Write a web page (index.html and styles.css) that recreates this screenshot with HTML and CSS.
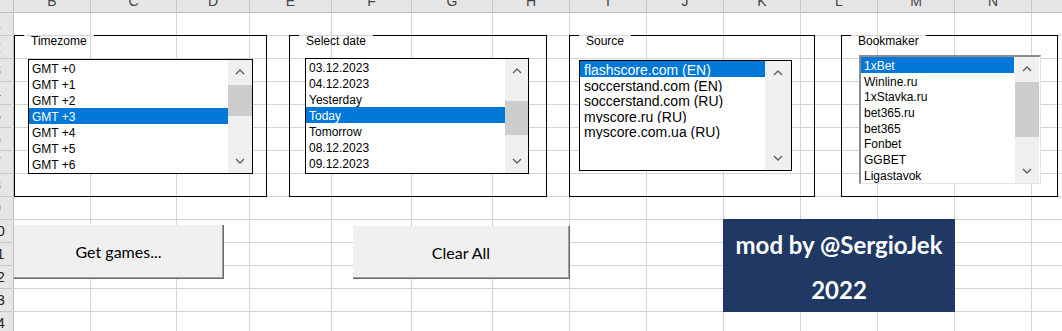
FILE: index.html
```html
<!DOCTYPE html>
<html lang="en">
<head>
    <meta charset="UTF-8">
    <title>Games parser</title>
    <link rel="stylesheet" href="styles.css">
</head>
<body>
<div class="sheet">
    <div class="col-heads">
        <div class="corner"></div>
        <div class="ch w77"><span>B</span></div>
        <div class="ch w86"><span>C</span></div>
        <div class="ch w73"><span>D</span></div>
        <div class="ch w82"><span>E</span></div>
        <div class="ch w80"><span>F</span></div>
        <div class="ch w81"><span>G</span></div>
        <div class="ch w77"><span>H</span></div>
        <div class="ch w77"><span>I</span></div>
        <div class="ch w77"><span>J</span></div>
        <div class="ch w77"><span>K</span></div>
        <div class="ch w77"><span>L</span></div>
        <div class="ch w77"><span>M</span></div>
        <div class="ch w77"><span>N</span></div>
        <div class="ch w77"><span>O</span></div>
    </div>
    <div class="grid">
        <div class="row-heads">
            <div class="rh">1</div>
            <div class="rh">2</div>
            <div class="rh">3</div>
            <div class="rh">4</div>
            <div class="rh">5</div>
            <div class="rh">6</div>
            <div class="rh">7</div>
            <div class="rh">8</div>
            <div class="rh">9</div>
            <div class="rh">10</div>
            <div class="rh">11</div>
            <div class="rh">12</div>
            <div class="rh">13</div>
            <div class="rh">14</div>
        </div>
        <div class="col w77"></div>
        <div class="col w86"></div>
        <div class="col w73"></div>
        <div class="col w82"></div>
        <div class="col w80"></div>
        <div class="col w81"></div>
        <div class="col w77"></div>
        <div class="col w77"></div>
        <div class="col w77"></div>
        <div class="col w77"></div>
        <div class="col w77"></div>
        <div class="col w77"></div>
        <div class="col w77"></div>
        <div class="col w77"></div>
    </div>

    <!-- form controls lying over the cells -->
    <div class="controls">
        <div class="frames">
            <div class="frame frame-tz">
                <div class="frame-head"><span class="edge"></span><span class="caption">Timezome</span><span class="edge fill"></span></div>
                <div class="listbox lb-tz">
                    <ul class="items">
                        <li>GMT +0</li>
                        <li>GMT +1</li>
                        <li>GMT +2</li>
                        <li class="sel">GMT +3</li>
                        <li>GMT +4</li>
                        <li>GMT +5</li>
                        <li>GMT +6</li>
                        <li>GMT +7</li>
                    </ul>
                    <div class="scroll">
                        <div class="arrow"><svg class="chev" width="10" height="6" viewBox="0 0 10 6"><polyline points="1,5 5,1 9,5"/></svg></div>
                        <div class="track"><div class="thumb"></div></div>
                        <div class="arrow"><svg class="chev" width="10" height="6" viewBox="0 0 10 6"><polyline points="1,1 5,5 9,1"/></svg></div>
                    </div>
                </div>
            </div>

            <div class="frame frame-date">
                <div class="frame-head"><span class="edge"></span><span class="caption">Select date</span><span class="edge fill"></span></div>
                <div class="listbox lb-date">
                    <ul class="items">
                        <li>03.12.2023</li>
                        <li>04.12.2023</li>
                        <li>Yesterday</li>
                        <li class="sel">Today</li>
                        <li>Tomorrow</li>
                        <li>08.12.2023</li>
                        <li>09.12.2023</li>
                        <li>10.12.2023</li>
                    </ul>
                    <div class="scroll">
                        <div class="arrow"><svg class="chev" width="10" height="6" viewBox="0 0 10 6"><polyline points="1,5 5,1 9,5"/></svg></div>
                        <div class="track"><div class="thumb"></div></div>
                        <div class="arrow"><svg class="chev" width="10" height="6" viewBox="0 0 10 6"><polyline points="1,1 5,5 9,1"/></svg></div>
                    </div>
                </div>
            </div>

            <div class="frame frame-src">
                <div class="frame-head"><span class="edge"></span><span class="caption">Source</span><span class="edge fill"></span></div>
                <div class="listbox lb-src">
                    <ul class="items">
                        <li class="sel">flashscore.com (EN)</li>
                        <li>soccerstand.com (EN)</li>
                        <li>soccerstand.com (RU)</li>
                        <li>myscore.ru (RU)</li>
                        <li>myscore.com.ua (RU)</li>
                    </ul>
                    <div class="scroll">
                        <div class="arrow"><svg class="chev" width="10" height="6" viewBox="0 0 10 6"><polyline points="1,5 5,1 9,5"/></svg></div>
                        <div class="track"></div>
                        <div class="arrow"><svg class="chev" width="10" height="6" viewBox="0 0 10 6"><polyline points="1,1 5,5 9,1"/></svg></div>
                    </div>
                </div>
            </div>

            <div class="frame frame-bm">
                <div class="frame-head"><span class="edge"></span><span class="caption">Bookmaker</span><span class="edge fill"></span></div>
                <div class="listbox lb-bm">
                    <ul class="items">
                        <li class="sel">1xBet</li>
                        <li>Winline.ru</li>
                        <li>1xStavka.ru</li>
                        <li>bet365.ru</li>
                        <li>bet365</li>
                        <li>Fonbet</li>
                        <li>GGBET</li>
                        <li>Ligastavok</li>
                    </ul>
                    <div class="scroll">
                        <div class="arrow"><svg class="chev" width="10" height="6" viewBox="0 0 10 6"><polyline points="1,5 5,1 9,5"/></svg></div>
                        <div class="track"><div class="thumb"></div></div>
                        <div class="arrow"><svg class="chev" width="10" height="6" viewBox="0 0 10 6"><polyline points="1,1 5,5 9,1"/></svg></div>
                    </div>
                </div>
            </div>
        </div>

        <div class="actions">
            <button class="btn btn-get">Get games...</button>
            <button class="btn btn-clear">Clear All</button>
            <div class="credit">
                <p>mod by @SergioJek</p>
                <p>2022</p>
            </div>
        </div>
    </div>
</div>
</body>
</html>
```

FILE: styles.css
```css
html, body {
    margin: 0;
    height: 100%;
    overflow: hidden;
    background-color: #fff;
}
body {
    font-family: "Liberation Sans", Arial, sans-serif;
}
.sheet {
    position: relative;
    width: 1062px;
    height: 331px;
    overflow: hidden;
}

/* column letters, cut at the top */
.col-heads {
    display: flex;
    height: 13px;
    box-sizing: border-box;
    background-color: #e6e6e6;
    border-bottom: 1px solid #bdbdbd;
}
.corner {
    flex: none;
    width: 14px;
    box-sizing: border-box;
    border-right: 1px solid #bdbdbd;
}
.ch {
    flex: none;
    box-sizing: border-box;
    border-right: 1px solid #c8c8c8;
    overflow: hidden;
    text-align: center;
    font-size: 14px;
    line-height: 14px;
    color: #444;
}
.ch span {
    display: block;
    margin-top: -6px;
}
.w73 { width: 73px; }
.w77 { width: 77px; }
.w80 { width: 80px; }
.w81 { width: 81px; }
.w82 { width: 82px; }
.w86 { width: 86px; }

/* cells */
.grid {
    display: flex;
}
.row-heads {
    flex: none;
    width: 14px;
    box-sizing: border-box;
    border-right: 1px solid #bdbdbd;
    background-color: #e6e6e6;
    overflow: hidden;
}
.rh {
    width: 30px;
    height: 23px;
    margin-left: -18px;
    box-sizing: border-box;
    border-bottom: 1px solid #c8c8c8;
    text-align: center;
    font-size: 14px;
    line-height: 22px;
    color: #222;
}
.col {
    flex: none;
    height: 322px;
    box-sizing: border-box;
    border-right: 1px solid #d4d4d4;
    background: repeating-linear-gradient(to bottom, transparent 0 22px, #d4d4d4 22px 23px);
}

/* controls */
.controls {
    position: absolute;
    top: 0;
    left: 0;
    right: 0;
    bottom: 0;
    padding-top: 35px;
    box-sizing: border-box;
}
.frames {
    display: flex;
    align-items: flex-start;
}
.frame {
    flex: none;
    height: 162px;
    box-sizing: border-box;
    border: 1px solid #000;
    border-top: 0;
}
.frame-tz { margin-left: 14px; width: 253px; }
.frame-date { margin-left: 22px; width: 258px; }
.frame-src { margin-left: 22px; width: 246px; }
.frame-bm { margin-left: 26px; width: 217px; }

.frame-head {
    display: flex;
    height: 1px;
}
.edge {
    flex: none;
    width: 9px;
    height: 1px;
    background-color: #000;
}
.edge.fill {
    flex: 1;
}
.caption {
    flex: none;
    margin-top: -1px;
    padding: 0 7px;
    font-size: 12px;
    line-height: 14px;
    white-space: nowrap;
}

.listbox {
    display: flex;
    box-sizing: border-box;
    border: 1px solid #000;
    background-color: #fff;
    overflow: hidden;
}
.items {
    flex: 1;
    min-width: 0;
    margin: 0;
    padding: 0;
    list-style: none;
    overflow: hidden;
    font-size: 12px;
    color: #000;
}
.items li {
    height: 16px;
    line-height: 18px;
    padding-left: 3px;
    overflow: hidden;
    white-space: nowrap;
}
.items li.sel {
    background-color: #0078d7;
    color: #fff;
}
.scroll {
    flex: none;
    display: flex;
    flex-direction: column;
    background-color: #f0f0f0;
}
.arrow {
    flex: none;
    height: 24px;
    display: flex;
    align-items: center;
    justify-content: center;
}
.track {
    flex: 1;
}
.thumb {
    background-color: #cdcdcd;
}
.chev polyline {
    fill: none;
    stroke: #606060;
    stroke-width: 1.4;
}

.lb-tz { width: 225px; height: 115px; margin: 23px 0 0 13px; }
.lb-tz .scroll { width: 24px; }
.lb-tz .thumb { margin-top: 1px; height: 31px; }

.lb-date { width: 224px; height: 116px; margin: 22px 0 0 15px; }
.lb-date .scroll { width: 23px; }
.lb-date .thumb { margin-top: 18px; height: 34px; }

.lb-src { width: 213px; height: 111px; margin: 24px 0 0 9px; }
.lb-src .items { font-size: 14px; }
.lb-src .items li { height: 15.5px; line-height: 18.5px; padding-left: 4px; }
.lb-src .scroll { width: 26px; }

.lb-bm {
    width: 182px;
    height: 129px;
    margin: 19px 0 0 17px;
    border-top: 2px solid #8c8c8c;
    border-left: 2px solid #8c8c8c;
    border-right: 1px solid #e3e3e3;
    border-bottom: 1px solid #e3e3e3;
}
.lb-bm .items li { height: 15.7px; line-height: 18px; }
.lb-bm .scroll { width: 24px; margin: 0 1px; }
.lb-bm .thumb { margin-top: 1px; height: 55px; }

/* buttons and credit */
.actions {
    display: flex;
    align-items: flex-start;
    margin-top: 22px;
}
.btn {
    flex: none;
    padding: 0;
    box-sizing: border-box;
    border: 0;
    border-right: 1px solid #696969;
    border-bottom: 1px solid #696969;
    box-shadow: inset -1px -1px 0 #a0a0a0;
    background-color: #f0f0f0;
    font-family: Lato, "Liberation Sans", sans-serif;
    font-size: 16px;
    color: #000;
}
.btn-get { margin: 6px 0 0 14px; width: 210px; height: 54px; }
.btn-clear { margin: 7px 0 0 129px; width: 217px; height: 53px; }

.credit {
    flex: none;
    margin-left: 153px;
    width: 232px;
    height: 93px;
    box-sizing: border-box;
    padding-top: 3px;
    background-color: #203864;
    color: #fff;
    text-align: center;
    font-family: Lato, "Liberation Sans", sans-serif;
    font-weight: bold;
    font-size: 24px;
}
.credit p {
    margin: 0;
    line-height: 45px;
}
```
